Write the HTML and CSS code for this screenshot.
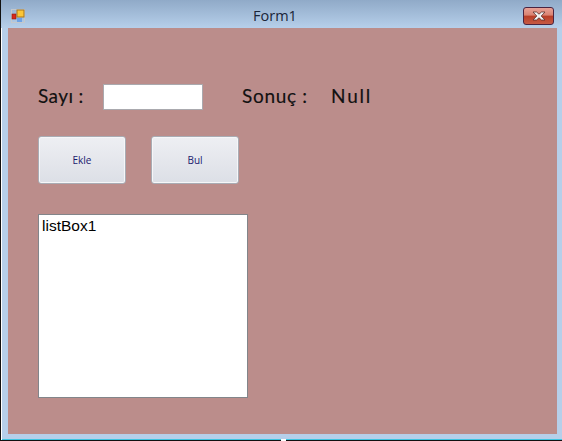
FILE: index.html
```html
<!DOCTYPE html>
<html lang="tr">
<head>
    <meta charset="UTF-8">
    <meta name="viewport" content="width=device-width, initial-scale=1.0">
    <title>Form1</title>
    <link rel="stylesheet" href="styles.css">
</head>
<body>
    <div class="window">
        <div class="title-bar">
            <svg class="app-icon" width="15" height="15" viewBox="0 0 15 15">
                <rect x="0.5" y="0.5" width="13" height="13" fill="none" stroke="#c4c8cc"/>
                <rect x="1" y="5" width="4" height="5" fill="#d8281a" stroke="#8e1a10" stroke-width="0.6"/>
                <rect x="6" y="1" width="7" height="7" fill="#fbc637" stroke="#a9761a"/>
                <rect x="6" y="9" width="5" height="4" fill="#6ea2e6"/>
            </svg>
            <span class="title-text">Form1</span>
            <div class="close-button">
                <svg width="14" height="10" viewBox="0 0 14 10">
                    <path d="M1 1h3.500l2.500 2.200 2.500-2.200h3.500l-3.800 4 3.800 4h-3.500l-2.500-2.200-2.500 2.200h-3.500l3.800-4z" fill="#f2f2f2" stroke="#55302f" stroke-width="0.8"/>
                </svg>
            </div>
        </div>
        <div class="client">
            <div class="top-row">
                <span class="label label-sayi">Sayı :</span>
                <input class="number-input" type="text">
                <span class="label label-sonuc">Sonuç :</span>
                <span class="label label-null">Null</span>
            </div>
            <div class="button-row">
                <button class="form-button">Ekle</button>
                <button class="form-button">Bul</button>
            </div>
            <div class="list-box">listBox1</div>
        </div>
        <span class="bottom-notch"></span>
    </div>
</body>
</html>
```

FILE: styles.css
```css
html, body {
    margin: 0;
    height: 100%;
    overflow: hidden;
}

.window {
    position: relative;
    display: flex;
    flex-direction: column;
    box-sizing: border-box;
    width: 562px;
    height: 441px;
    background-color: #b6cfea;
    border-left: 1px solid #111;
    border-bottom: 1px solid #111;
    box-shadow: inset 1px 0 0 #fff, inset 0 -1px 0 #3fc4e0;
}

.title-bar {
    position: relative;
    display: flex;
    align-items: center;
    justify-content: center;
    flex: none;
    height: 28px;
    background: linear-gradient(#90aac8, #b6cfea);
}

.app-icon {
    position: absolute;
    top: 9px;
    left: 10px;
}

.title-text {
    font-family: "Open Sans", sans-serif;
    font-size: 14.5px;
    color: #1a2538;
    margin-top: 3px;
    margin-right: 13px;
}

.close-button {
    position: absolute;
    top: 7px;
    right: 8px;
    display: flex;
    align-items: center;
    justify-content: center;
    box-sizing: border-box;
    width: 31px;
    height: 18px;
    border: 1px solid #4b2440;
    border-radius: 3px;
    background: linear-gradient(#e9a196 0, #d98271 45%, #b93d26 50%, #c65a45 100%);
}

.client {
    flex: 1;
    margin: 0 5px 6px 7px;
    padding: 56px 0 0 30px;
    background-color: #bb8d8b;
}

.top-row {
    display: flex;
    align-items: center;
    height: 26px;
}

.label {
    padding-bottom: 4px;
    font-family: Lato, sans-serif;
    font-size: 19px;
    letter-spacing: 1px;
    color: #111;
    -webkit-text-stroke: 0.15px #111;
}

.label-sayi {
    width: 65px;
    letter-spacing: 0.4px;
}

.number-input {
    box-sizing: border-box;
    width: 100px;
    height: 26px;
    margin: 0;
    padding: 0;
    background-color: #fff;
    border: 1px solid #aaa9ae;
}

.label-sonuc {
    width: 89px;
    margin-left: 39px;
    letter-spacing: 0.7px;
}

.label-null {
    letter-spacing: 1.8px;
}

.button-row {
    display: flex;
    gap: 25px;
    margin-top: 26px;
}

.form-button {
    box-sizing: border-box;
    width: 88px;
    height: 48px;
    padding: 0;
    font-family: "Open Sans", sans-serif;
    font-size: 10px;
    color: #1a1a6e;
    background: linear-gradient(#eeeff3, #dcdfe6);
    border: 1px solid #a9acb4;
    border-radius: 3px;
    box-shadow: inset 0 0 0 1px #f6f6f8;
}

.list-box {
    box-sizing: border-box;
    width: 210px;
    height: 184px;
    margin-top: 30px;
    padding: 2px 3px;
    font-family: "Liberation Sans", sans-serif;
    font-size: 15.5px;
    color: #000;
    background-color: #fff;
    border: 1px solid #82858a;
}

.bottom-notch {
    position: absolute;
    left: 280px;
    bottom: -1px;
    width: 5px;
    height: 2px;
    background-color: #fff;
}
```
